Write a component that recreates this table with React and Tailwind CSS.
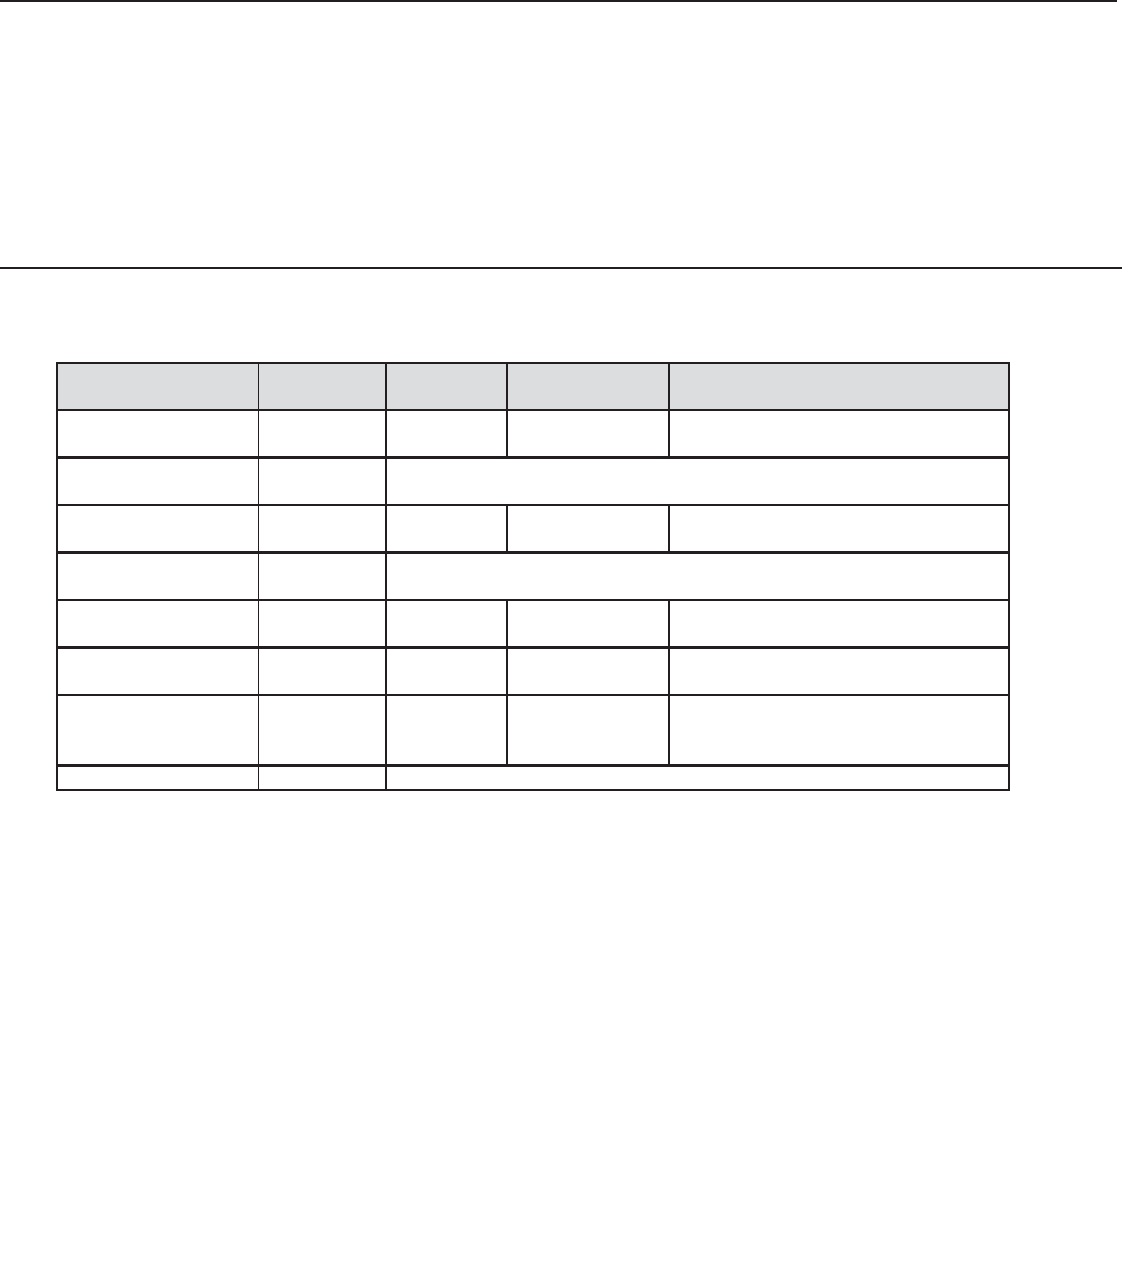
const rows = [
  { h: 'h-[47px]', top: 'border-t-2', header: true },
  { h: 'h-[47px]', top: 'border-t-2' },
  { h: 'h-[48px]', top: 'border-t-[3px]', span: true },
  { h: 'h-[47px]', top: 'border-t-2' },
  { h: 'h-[48px]', top: 'border-t-[3px]', span: true },
  { h: 'h-[47px]', top: 'border-t-2' },
  { h: 'h-[48px]', top: 'border-t-[3px]' },
  { h: 'h-[70px]', top: 'border-t-2' },
  { h: 'h-[25px]', top: 'border-t-[3px]', span: true },
]

// left border of each column = the line before it
const colLeft = ['border-l-2', 'border-l', 'border-l-2', 'border-l-2', 'border-l-2']

function Cell({ row, left, span }) {
  return (
    <div
      className={[
        'border-[#231f20]',
        row.h,
        row.top,
        left,
        span ? 'col-span-3' : '',
        row.header ? 'bg-[#dcdddf]' : 'bg-white',
      ].join(' ')}
    />
  )
}

export default function App() {
  return (
    <div className="min-h-[1276px] w-[1122px] bg-white font-['Liberation_Sans',Arial,sans-serif]">
      <div className="h-[2px] w-[1117px] bg-[#231f20]" />
      <div className="mt-[265px] h-[2px] w-full bg-[#231f20]" />

      <div className="ml-[56px] mt-[93px] grid w-fit grid-cols-[202px_127px_121px_162px_340px] border-b-2 border-r-2 border-[#231f20]">
        {rows.map((row, i) =>
          row.span ? (
            <div key={i} className="contents">
              <Cell row={row} left={colLeft[0]} />
              <Cell row={row} left={colLeft[1]} />
              <Cell row={row} left={colLeft[2]} span />
            </div>
          ) : (
            <div key={i} className="contents">
              {colLeft.map((left, j) => (
                <Cell key={j} row={row} left={left} />
              ))}
            </div>
          )
        )}
      </div>
    </div>
  )
}
